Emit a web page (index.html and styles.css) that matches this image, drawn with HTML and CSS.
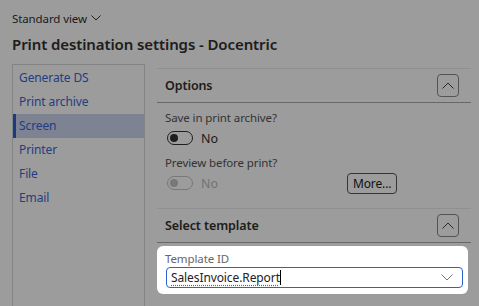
FILE: index.html
```html
<!DOCTYPE html>
<html lang="en">
<head>
    <meta charset="UTF-8">
    <meta name="viewport" content="width=device-width, initial-scale=1.0">
    <title>Print destination settings - Docentric</title>
    <link rel="stylesheet" href="styles.css">
</head>
<body>
    <div class="dialog">
        <div class="view-switch">Standard view
            <svg class="chev" width="10" height="6" viewBox="0 0 10 6"><path d="M0.5 0.5 L5 5 L9.5 0.5" fill="none" stroke="currentColor" stroke-width="1"/></svg>
        </div>
        <h1>Print destination settings - Docentric</h1>

        <div class="layout">
            <ul class="nav">
                <li>Generate DS</li>
                <li>Print archive</li>
                <li class="active">Screen</li>
                <li>Printer</li>
                <li>File</li>
                <li>Email</li>
            </ul>

            <div class="content">
                <div class="section">
                    <div class="section-head">
                        <span>Options</span>
                        <button class="collapse"><svg width="12" height="7" viewBox="0 0 12 7"><path d="M0.5 6.5 L6 1 L11.5 6.5" fill="none" stroke="currentColor" stroke-width="1"/></svg></button>
                    </div>
                    <div class="fields">
                        <div class="field">
                            <label>Save in print archive?</label>
                            <div class="toggle-row">
                                <span class="toggle"><span class="knob"></span></span>
                                <span>No</span>
                            </div>
                        </div>
                        <div class="field">
                            <label>Preview before print?</label>
                            <div class="toggle-row disabled">
                                <span class="toggle"><span class="knob"></span></span>
                                <span class="no">No</span>
                                <button class="more">More...</button>
                            </div>
                        </div>
                    </div>
                </div>

                <div class="section">
                    <div class="section-head">
                        <span>Select template</span>
                        <button class="collapse"><svg width="12" height="7" viewBox="0 0 12 7"><path d="M0.5 6.5 L6 1 L11.5 6.5" fill="none" stroke="currentColor" stroke-width="1"/></svg></button>
                    </div>
                    <div class="spot">
                        <label>Template ID</label>
                        <div class="combo">
                            <span class="value">SalesInvoice.Report</span><span class="caret"></span>
                            <svg class="down" width="12" height="7" viewBox="0 0 12 7"><path d="M0.5 0.5 L6 6 L11.5 0.5" fill="none" stroke="currentColor" stroke-width="1"/></svg>
                        </div>
                    </div>
                </div>
            </div>
        </div>
    </div>
    <div class="scrim"></div>
</body>
</html>
```

FILE: styles.css
```css
body {
    margin: 0;
    font-family: "Noto Sans", "Open Sans", sans-serif;
    font-size: 11.5px;
    letter-spacing: -0.1px;
    color: #323130;
    background-color: white;
    overflow: hidden;
}
.dialog {
    height: 306px;
    box-sizing: border-box;
    padding: 10px 8px 0 12px;
    border-top: 1px solid #fff;
    overflow: hidden;
}
.scrim {
    position: fixed;
    inset: 0;
    background-color: rgba(0, 0, 0, 0.39);
    z-index: 1;
}
.view-switch {
    display: flex;
    align-items: center;
    gap: 4px;
    font-size: 11.5px;
    line-height: 16px;
}
.view-switch .chev {
    margin-top: -2px;
}
h1 {
    margin: 6px 0 0;
    font-size: 15px;
    font-weight: 600;
    letter-spacing: -0.1px;
    line-height: 22px;
}
.layout {
    display: flex;
    gap: 12px;
    margin-top: 9px;
    height: 243px;
}
.nav {
    list-style: none;
    margin: 0;
    padding: 0;
    width: 131px;
    border: 1px solid #d8d8d8;
    border-bottom: none;
}
.nav li {
    height: 24px;
    line-height: 24px;
    padding-left: 6px;
    color: #3a66d6;
    font-size: 12px;
}
.nav li:first-child {
    margin-top: 1px;
}
.nav li.active {
    background-color: #ccd6ef;
    border-left: 3px solid #2f5fd0;
    padding-left: 3px;
}
.content {
    flex: 1;
    margin-top: 4px;
}
.section {
    border-top: 1px solid #ececec;
}
.section-head {
    display: flex;
    align-items: center;
    justify-content: space-between;
    height: 33px;
    padding: 0 12px 0 8px;
    border-bottom: 1px solid #a8a8a8;
    font-size: 12.5px;
    font-weight: 600;
}
.collapse {
    width: 22px;
    height: 23px;
    padding: 0;
    border: 1px solid #8a8a8a;
    border-radius: 4px;
    background: white;
    color: #444;
    display: flex;
    align-items: center;
    justify-content: center;
}
.fields {
    padding: 6px 8px 14px;
}
.field label {
    display: block;
    line-height: 18px;
    color: #555;
}
.field + .field {
    margin-top: 5px;
}
.toggle-row {
    display: flex;
    align-items: center;
    gap: 8px;
    height: 22px;
    font-size: 12.5px;
}
.toggle {
    width: 24px;
    height: 12px;
    border: 1px solid #333;
    border-radius: 8px;
    position: relative;
    margin-left: 2px;
}
.knob {
    position: absolute;
    left: 2px;
    top: 2px;
    width: 8px;
    height: 8px;
    border-radius: 50%;
    background-color: #333;
}
.disabled .toggle {
    border-color: #c4c4c4;
}
.disabled .knob {
    background-color: #c4c4c4;
}
.disabled .no {
    color: #bdbdbd;
}
.more {
    margin-left: 121px;
    height: 21px;
    padding: 0 5px;
    border: 1px solid #555;
    border-radius: 4px;
    background: white;
    font-family: inherit;
    font-size: 12px;
    letter-spacing: -0.1px;
    color: #222;
}
.spot {
    position: relative;
    z-index: 2;
    margin-top: 3px;
    width: 311px;
    box-sizing: border-box;
    padding: 4px 5px 6px 9px;
    background: white;
    border-radius: 6px;
}
.spot label {
    display: block;
    color: #666;
    line-height: 17px;
    margin-left: -1px;
}
.combo {
    display: flex;
    align-items: center;
    height: 21px;
    box-sizing: border-box;
    border: 1px solid #2a62d0;
    border-radius: 4px;
    padding: 0 9px 0 4px;
    font-size: 12px;
    color: #222;
}
.value {
    text-decoration: underline dotted #e23030;
    text-underline-offset: 3px;
}
.caret {
    width: 1px;
    height: 15px;
    background: #000;
}
.down {
    margin-left: auto;
    color: #777;
}
```
